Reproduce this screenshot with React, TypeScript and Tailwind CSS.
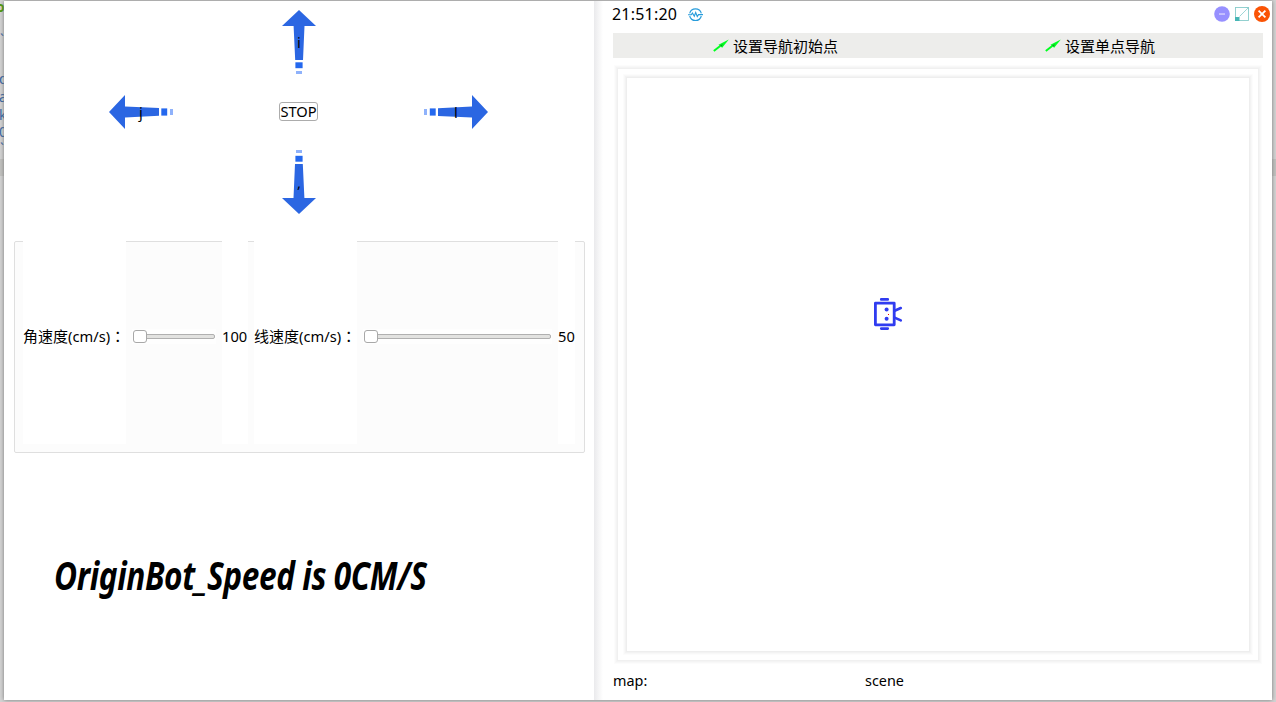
import React from 'react';

const arrowRotation = {
  up: 'rotate-0',
  right: 'rotate-90',
  down: 'rotate-180',
  left: '-rotate-90',
};

type Direction = keyof typeof arrowRotation;

function ArrowButton({ direction, label }: { direction: Direction; label: string }) {
  return (
    <button className="relative flex size-16 items-center justify-center text-[14.67px] leading-none">
      <svg viewBox="0 0 64 64" className={`absolute inset-0 size-16 ${arrowRotation[direction]}`}>
        <path d="M32 0L49 16H37.5L36 50H28.2L26.6 16H15Z" fill="#2b66e2" />
        <rect x="28.4" y="52.3" width="7.2" height="5.9" fill="#2468ee" />
        <rect x="29" y="61" width="6" height="3" fill="#8fb2fb" />
      </svg>
      <span className="relative">{label}</span>
    </button>
  );
}

function SpeedSlider({ className }: { className: string }) {
  return (
    <div className={`flex h-[15px] items-center bg-[#fefefe] px-px ${className}`}>
      <div className="z-10 h-[13px] w-[14px] shrink-0 rounded-[3px] border border-[#a8a8a8] bg-white" />
      <div className="-ml-1 h-[5px] grow rounded-[2px] border border-[#b0b0b0] bg-[#e2e2e0]" />
    </div>
  );
}

function SpeedLabel({ className, children }: { className: string; children: React.ReactNode }) {
  return (
    <div className={`-mt-px flex h-[203px] items-center whitespace-nowrap bg-white pb-[13px] ${className}`}>
      {children}
    </div>
  );
}

function SpeedName({ name }: { name: string }) {
  return (
    <SpeedLabel className="w-[103px]">
      <span>
        <span className="text-[15px]">{name}</span>
        <span className="tracking-[0.05px]">(cm/s)</span>
        <span className="font-['Noto_Sans_CJK_TC'] text-[15px] leading-none">：</span>
      </span>
    </SpeedLabel>
  );
}

function GreenArrow() {
  return (
    <svg viewBox="0 0 16 14" className="h-3.5 w-4">
      <path d="M0.8 12L7.5 6.8" stroke="#00ff20" strokeWidth="2" />
      <path d="M5.5 5.8L15.8 0.5L9.2 8.8Z" fill="#00ff20" />
      <path d="M7.2 6.2L10 5.2L8.4 7.5Z" fill="#148e26" />
    </svg>
  );
}

function ControlPanel() {
  return (
    <section className="flex w-[590px] shrink-0 flex-col">
      <div className="ml-[105px] mt-[9px] grid w-[379px] grid-cols-[126px_128px_125px] grid-rows-[64px_76px_64px] items-center">
        <div className="col-start-2 flex justify-center"><ArrowButton direction="up" label="i" /></div>
        <div className="col-start-1 row-start-2"><ArrowButton direction="left" label="j" /></div>
        <div className="col-start-2 row-start-2 flex justify-center pb-px pr-px">
          <button className="flex h-[19px] w-[39px] items-center justify-center rounded-[3px] border border-[#acacac] text-[14.67px] leading-none">
            STOP
          </button>
        </div>
        <div className="col-start-3 row-start-2 flex justify-end"><ArrowButton direction="right" label="l" /></div>
        <div className="col-start-2 row-start-3 flex justify-center"><ArrowButton direction="down" label="," /></div>
      </div>
      <div className="ml-2.5 mt-[27px] flex h-[212px] w-[571px] gap-[6px] rounded-[2px] border border-[#dfdfdf] bg-[#fcfcfc] pl-2 text-[14.67px]">
        <SpeedName name="角速度" />
        <SpeedSlider className="mt-[87px] w-[84px]" />
        <SpeedLabel className="w-[26px]">100</SpeedLabel>
        <SpeedName name="线速度" />
        <SpeedSlider className="mt-[87px] w-[189px]" />
        <SpeedLabel className="w-[17px]">50</SpeedLabel>
      </div>
      <h1 className="ml-[50px] mt-[95px] origin-left scale-x-[0.79] whitespace-nowrap font-['Noto_Sans'] text-[40px] font-bold italic leading-[54px] tracking-[-0.5px]">
        OriginBot_Speed is 0CM/S
      </h1>
    </section>
  );
}

function WindowButtons() {
  return (
    <div className="ml-auto mr-[2px] flex items-center gap-1">
      <svg viewBox="0 0 16 16" className="size-4">
        <circle cx="8" cy="8" r="7.8" fill="#9790ff" />
        <rect x="5" y="7.2" width="6" height="1.7" fill="#cbc7ff" />
      </svg>
      <svg viewBox="0 0 16 16" className="size-4">
        <rect x="1.5" y="1.5" width="13" height="13" fill="none" stroke="#88cccb" strokeWidth="0.9" />
        <path d="M5.5 10.5L14 2M11.5 1.5h3v3" fill="none" stroke="#88cccb" strokeWidth="0.8" />
        <rect x="1" y="11" width="4.5" height="4" fill="#46b6b5" />
      </svg>
      <svg viewBox="0 0 16 16" className="size-4">
        <circle cx="8" cy="8" r="8" fill="#fa5305" />
        <path d="M4.6 4.6l6.8 6.8M11.4 4.6l-6.8 6.8" stroke="#fff" strokeWidth="1.8" />
      </svg>
    </div>
  );
}

function PulseIcon() {
  return (
    <svg viewBox="0 0 16 16" className="size-[15px]" fill="none" stroke="#289cdb" strokeWidth="1.2">
      <path d="M1.8 6.8A6.4 6.4 0 0 1 14.2 6.8M1.8 9.6A6.4 6.4 0 0 0 14.2 9.6" />
      <path d="M0 8.2h3.5l1.2-1.8 2 3.5 1.5-4 1.7 4.2 1.3-1.9H16" />
    </svg>
  );
}

function Robot() {
  return (
    <svg viewBox="0 0 34 34" className="absolute left-[246px] top-[219px] size-[34px]" fill="none" stroke="#303cf0" strokeLinecap="round">
      <rect x="2.4" y="6.2" width="18.8" height="21.6" strokeWidth="2.8" strokeLinejoin="round" />
      <path d="M8.2 2.4h6.6M8.2 31.6h6.6" strokeWidth="2.6" />
      <path d="M21.6 13.8l6.2-2.8M21.6 20.6l6.2 2.8" strokeWidth="2.6" />
      <circle cx="13.6" cy="12.4" r="2" fill="#303cf0" stroke="none" />
      <circle cx="13.6" cy="21.7" r="2" fill="#303cf0" stroke="none" />
      <rect x="15" y="17" width="1" height="1" fill="#f00000" stroke="none" />
    </svg>
  );
}

function MapPanel() {
  return (
    <section className="flex grow flex-col bg-[linear-gradient(to_right,#eaeaec_0,#fff_9px)] pl-[18px]">
      <header className="flex h-[26px] items-center">
        <time className="w-[76px] text-base leading-none tracking-[0.2px]">21:51:20</time>
        <PulseIcon />
        <WindowButtons />
      </header>
      <nav className="ml-px mt-[6px] grid h-[25px] w-[650px] grid-cols-2 bg-[#ededeb] text-[15px]">
        <button className="flex items-center justify-center gap-1"><GreenArrow /><span className="pt-px">设置导航初始点</span></button>
        <button className="flex items-center justify-center gap-1 pr-[1px]"><GreenArrow /><span className="pt-px">设置单点导航</span></button>
      </nav>
      <div className="ml-[6px] mt-[11px] h-[591px] w-[640px] bg-white p-[9px] shadow-[0_0_0_1px_#f0f0f0,0_0_0_2px_#f4f4f4,0_0_0_3px_#f8f8f8,0_0_0_4px_#fcfcfc]">
        <div className="relative h-[573px] w-[622px] bg-white shadow-[0_0_0_1px_#eeeeee,0_0_0_2px_#f3f3f3,0_0_0_3px_#f8f8f8,0_0_0_4px_#fcfcfc]">
          <Robot />
        </div>
      </div>
      <footer className="ml-px mt-[11px] flex h-5 text-[14.4px] leading-5">
        <span className="w-[252px]">map:</span><span>scene</span>
      </footer>
    </section>
  );
}

export default function App() {
  return (
    <div className="relative h-[702px] w-[1276px] overflow-hidden bg-[#d3d3d3] font-['Noto_Sans','Noto_Sans_CJK_SC',sans-serif] text-black">
      <div className="absolute inset-x-0 top-[159px] h-[17px] bg-[#c1c1bf]" />
      <div className="absolute left-0 top-0 h-[159px] w-1 overflow-hidden text-sm leading-none text-[#3465a4]">
        <span className="absolute left-[-4px] top-0 font-bold text-[#4e9a06]">o</span>
        <span className="absolute left-0 top-[33px]">`</span>
        <span className="absolute -left-px top-[72px]">d</span>
        <span className="absolute -left-px top-[90px]">a</span>
        <span className="absolute -left-px top-[108px]">k</span>
        <span className="absolute -left-px top-[125px]">0</span>
        <span className="absolute left-0 top-[142px]">`</span>
      </div>
      <main className="relative ml-1 mt-px flex h-[699px] w-[1268px] bg-white shadow-[0_0_4px_#777777]">
        <ControlPanel />
        <MapPanel />
      </main>
    </div>
  );
}
